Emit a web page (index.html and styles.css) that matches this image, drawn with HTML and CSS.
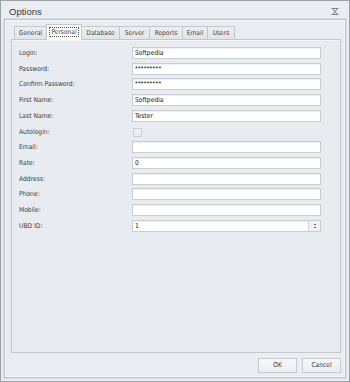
FILE: index.html
```html
<!DOCTYPE html>
<html>
<head>
<meta charset="utf-8">
<link rel="stylesheet" href="styles.css">
</head>
<body>
<div class="window">
  <div class="titlebar">
    <span class="title">Options</span>
    <svg class="close" width="8" height="7" viewBox="0 0 8 7"><path d="M0.5 0.5h7M0.5 6.5h7M2 1l4 5M6 1l-4 5" stroke="#80848a" stroke-width="1" fill="none"/></svg>
  </div>
  <div class="frame">
    <div class="tabs">
      <div class="tab w-general">General</div>
      <div class="tab active"><span class="focus">Personal</span></div>
      <div class="tab w-database">Database</div>
      <div class="tab w-server">Server</div>
      <div class="tab w-reports">Reports</div>
      <div class="tab w-email">Email</div>
      <div class="tab w-users">Users</div>
    </div>
    <div class="panel">
      <div class="form">
        <label>Login:</label><div class="input">Softpedia</div>
        <label>Password:</label><div class="input pw">*********</div>
        <label>Confirm Password:</label><div class="input pw">*********</div>
        <label>First Name:</label><div class="input">Softpedia</div>
        <label>Last Name:</label><div class="input">Tester</div>
        <label>Autologin:</label><div class="checkcell"><span class="check"></span></div>
        <label>Email:</label><div class="input"></div>
        <label>Rate:</label><div class="input">0</div>
        <label>Address:</label><div class="input"></div>
        <label>Phone:</label><div class="input"></div>
        <label>Mobile:</label><div class="input"></div>
        <label>UBD ID:</label><div class="input spin"><span class="val">1</span><span class="spinbtn"><i></i><i></i></span></div>
      </div>
    </div>
    <div class="buttons">
      <div class="btn">OK</div>
      <div class="btn">Cancel</div>
    </div>
  </div>
</div>
</body>
</html>
```
FILE: styles.css
```css
html, body {
  margin: 0;
  padding: 0;
}
body {
  width: 350px;
  height: 382px;
  font-family: "DejaVu Sans Condensed", "DejaVu Sans", sans-serif;
  color: #3c3c3c;
  background: #e9ecf0;
}
.window {
  box-sizing: border-box;
  width: 350px;
  height: 382px;
  border: 1px solid #9da1a6;
  background: #e9ecf0;
  display: flex;
  flex-direction: column;
}
.titlebar {
  height: 18px;
  display: flex;
  align-items: center;
  justify-content: space-between;
  padding: 0 10px 0 8px;
  flex: none;
}
.title {
  font-family: "Liberation Sans", sans-serif;
  font-size: 9.5px;
  color: #3a3a3a;
  padding-top: 2px;
}
.close {
  display: block;
  margin-top: 2px;
}
.frame {
  flex: 1;
  margin: 0 3px 3px 3px;
  border: 1px solid #c3c7cc;
  box-shadow: inset 0 0 0 1px #f5f6f8, 0 0 0 1px #d9dce0;
  background: #e9ecf0;
  display: flex;
  flex-direction: column;
  padding: 4px 4px 0 6px;
}
.tabs {
  display: flex;
  align-items: flex-end;
  height: 15px;
  padding-left: 3px;
  position: relative;
  z-index: 1;
}
.tab {
  box-sizing: border-box;
  height: 13px;
  font-size: 6.6px;
  line-height: 12px;
  text-align: center;
  border: 1px solid #c4c8cd;
  border-bottom: none;
  margin-left: -1px;
  background: linear-gradient(#eceef1, #e1e4e8);
  color: #454545;
}
.w-general { margin-left: 0; width: 33px; }
.w-database { width: 39px; }
.w-server { width: 31px; }
.w-reports { width: 34px; }
.w-email { width: 26px; }
.w-users { width: 28px; }
.tab.active {
  width: 36px;
  height: 16px;
  background: #ffffff;
  margin: 0 0 -1px -1px;
  line-height: 14px;
  position: relative;
  z-index: 2;
}
.focus {
  border: 1px dotted #555;
  padding: 0 1px;
}
.panel {
  box-sizing: border-box;
  height: 314px;
  border: 1px solid #c3c7cc;
  box-shadow: inset 0 1px 0 #f4f5f7;
  background: #e8ebef;
  padding: 7px 19px 0 7px;
  width: 330px;
}
.form {
  display: grid;
  grid-template-columns: 113px 189px;
  grid-auto-rows: 12px;
  row-gap: 3.73px;
  align-items: center;
}
label {
  font-size: 6.7px;
  color: #3c3c3c;
  white-space: nowrap;
}
.input {
  box-sizing: border-box;
  height: 12px;
  background: #ffffff;
  border: 1px solid #c9cdd2;
  box-shadow: inset 0 1px 0 #eef0f2;
  font-size: 6.7px;
  line-height: 10px;
  padding-left: 2px;
  color: #222;
  overflow: hidden;
}
.pw {
  letter-spacing: 0.2px;
  font-family: "Liberation Sans", sans-serif;
  font-size: 7px;
}
.checkcell {
  height: 12px;
  display: flex;
  align-items: center;
}
.check {
  box-sizing: border-box;
  width: 9px;
  height: 9px;
  margin-left: 1px;
  margin-top: 1px;
  border: 1px solid #cdd0d4;
  background: #eceef1;
}
.spin {
  display: flex;
  padding-left: 0;
}
.spin .val {
  flex: 1;
  padding-left: 2px;
}
.spinbtn {
  width: 11px;
  height: 10px;
  background: #eef0f2;
  border-left: 1px solid #d6d9dd;
  display: flex;
  flex-direction: column;
  align-items: center;
  justify-content: center;
  gap: 2px;
}
.spinbtn i {
  display: block;
  width: 2px;
  height: 1px;
  background: #666;
}
.buttons {
  flex: 1;
  display: flex;
  justify-content: flex-end;
  align-items: flex-start;
  gap: 5px;
  padding: 5px 0 0 0;
}
.btn {
  box-sizing: border-box;
  width: 39px;
  height: 15px;
  border: 1px solid #c6cace;
  background: linear-gradient(#f6f7f8, #eceef1);
  font-size: 6.6px;
  line-height: 13px;
  text-align: center;
  color: #333;
}
```
